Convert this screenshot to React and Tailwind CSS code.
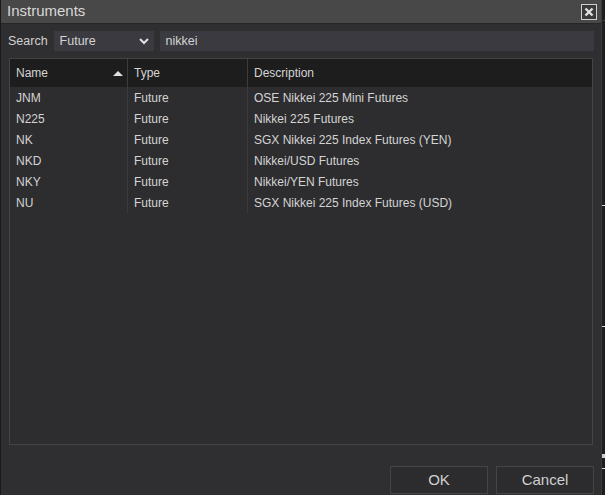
import React from "react";

const rows = [
  { name: "JNM", type: "Future", desc: "OSE Nikkei 225 Mini Futures" },
  { name: "N225", type: "Future", desc: "Nikkei 225 Futures" },
  { name: "NK", type: "Future", desc: "SGX Nikkei 225 Index Futures (YEN)" },
  { name: "NKD", type: "Future", desc: "Nikkei/USD Futures" },
  { name: "NKY", type: "Future", desc: "Nikkei/YEN Futures" },
  { name: "NU", type: "Future", desc: "SGX Nikkei 225 Index Futures (USD)" },
];

const App = () => {
  return (
    <div
      className="flex h-[495px] w-[605px] overflow-hidden bg-[#1d1d1f] text-[12px] text-[#d4d4d4]"
      style={{ fontFamily: '"Liberation Sans", Arial, sans-serif' }}
    >
      <div className="flex w-[601px] flex-col border-l border-[#1a1a1a] bg-[#2f2f31]">
        {/* title bar */}
        <div className="flex h-[24px] items-center justify-between border-b border-[#262626] bg-[#484848] pl-[6px] pr-[4px]">
          <span className="text-[15px] text-[#d8d8d8]">Instruments</span>
          <button className="flex h-[16px] w-[16px] items-center justify-center border border-[#cfcfcf] bg-[#3a3a3a]">
            <svg width="10" height="10" viewBox="0 0 10 10">
              <path d="M1.5 1.5 L8.5 8.5 M8.5 1.5 L1.5 8.5" stroke="#e0e0e0" strokeWidth="2.4" />
            </svg>
          </button>
        </div>

        {/* search row */}
        <div className="mt-[6px] flex h-[21px] items-center pl-[7px] pr-[7px] pt-px">
          <span className="mr-[6px] text-[12.5px] text-[#d0d0d0]">Search</span>
          <div className="flex h-full w-[100px] items-center justify-between bg-[#3a3a40] pl-[6px] pr-[5px] text-[12.5px]">
            <span>Future</span>
            <svg width="10" height="8" viewBox="0 0 10 8">
              <path d="M1 2 L5 6 L9 2" stroke="#e0e0e0" strokeWidth="2" fill="none" />
            </svg>
          </div>
          <div className="ml-[6px] flex h-full flex-1 items-center bg-[#3a3a40] pl-[6px] text-[12.5px]">
            nikkei
          </div>
        </div>

        {/* table */}
        <div className="mx-[8px] mt-[7px] flex h-[387px] flex-col border border-[#444446] bg-[#2d2d2f]">
          <div className="flex h-[28px] bg-[#1d1d1d]">
            <div className="flex w-[118px] items-center justify-between border-r border-[#3c3c3c] pl-[6px] pr-[4px]">
              <span>Name</span>
              <svg width="10" height="6" viewBox="0 0 10 6">
                <path d="M0 6 L5 1 L10 6 Z" fill="#e0e0e0" />
              </svg>
            </div>
            <div className="flex w-[120px] items-center border-r border-[#3c3c3c] pl-[6px]">
              Type
            </div>
            <div className="flex flex-1 items-center pl-[6px]">Description</div>
          </div>
          <div className="flex">
            <div className="flex w-[118px] flex-col border-r border-[#3a3a3c]">
              {rows.map((r) => (
                <div key={r.name} className="flex h-[21px] items-center pl-[6px]">
                  {r.name}
                </div>
              ))}
            </div>
            <div className="flex w-[120px] flex-col border-r border-[#3a3a3c]">
              {rows.map((r) => (
                <div key={r.name} className="flex h-[21px] items-center pl-[6px]">
                  {r.type}
                </div>
              ))}
            </div>
            <div className="flex flex-1 flex-col">
              {rows.map((r) => (
                <div key={r.name} className="flex h-[21px] items-center pl-[6px]">
                  {r.desc}
                </div>
              ))}
            </div>
          </div>
        </div>

        {/* buttons */}
        <div className="mt-[21px] flex justify-end gap-[8px] pr-[7px]">
          <button className="flex h-[28px] w-[98px] items-center justify-center border border-[#454547] bg-[#2c2c2e] text-[15px] text-[#d0d0d0]">
            OK
          </button>
          <button className="flex h-[28px] w-[98px] items-center justify-center border border-[#454547] bg-[#2c2c2e] text-[15px] text-[#d0d0d0]">
            Cancel
          </button>
        </div>
      </div>

      {/* background app sliver */}
      <div className="flex flex-1 flex-col border-l border-[#3a3a3a] bg-[#1e1e1e]">
        <div className="h-[20px]" />
        <div className="h-px bg-[#3a3a3a]" />
        <div className="h-[184px]" />
        <div className="h-px bg-[#dddddd]" />
        <div className="h-[120px]" />
        <div className="h-px bg-[#dddddd]" />
        <div className="h-[127px]" />
        <div className="h-[4px] bg-[#cccccc]" />
        <div className="h-[10px]" />
        <div className="h-px bg-[#dddddd]" />
      </div>
    </div>
  );
};

export default App;
